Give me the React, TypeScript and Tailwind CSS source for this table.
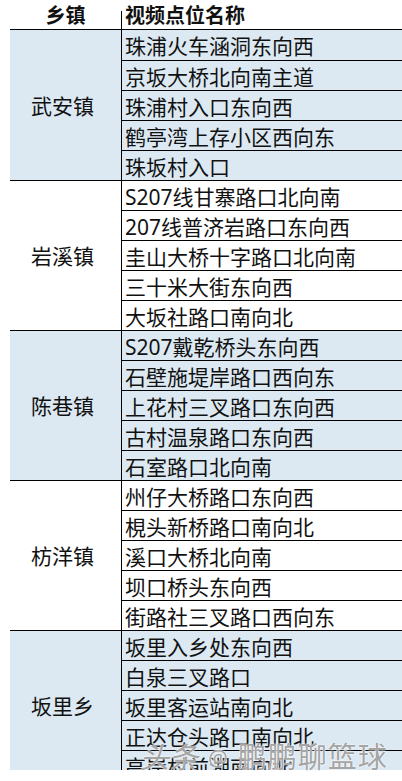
const groups: { town: string; spots: string[]; blue: boolean }[] = [
  {
    town: '武安镇',
    blue: true,
    spots: ['珠浦火车涵洞东向西', '京坂大桥北向南主道', '珠浦村入口东向西', '鹤亭湾上存小区西向东', '珠坂村入口'],
  },
  {
    town: '岩溪镇',
    blue: false,
    spots: ['S207线甘寨路口北向南', '207线普济岩路口东向西', '圭山大桥十字路口北向南', '三十米大街东向西', '大坂社路口南向北'],
  },
  {
    town: '陈巷镇',
    blue: true,
    spots: ['S207戴乾桥头东向西', '石壁施堤岸路口西向东', '上花村三叉路口东向西', '古村温泉路口东向西', '石室路口北向南'],
  },
  {
    town: '枋洋镇',
    blue: false,
    spots: ['州仔大桥路口东向西', '梘头新桥路口南向北', '溪口大桥北向南', '坝口桥头东向西', '街路社三叉路口西向东'],
  },
  {
    town: '坂里乡',
    blue: true,
    spots: ['坂里入乡处东向西', '白泉三叉路口', '坂里客运站南向北', '正达仓头路口南向北', '高岸村前湖南向北'],
  },
];

const font = "font-['Noto_Sans','Noto_Sans_CJK_SC',sans-serif]";

export default function App() {
  return (
    <div className={`relative w-[402px] h-[781px] bg-white text-[#111] ${font}`}>
      <div className="w-[392px] h-[770px] ml-[10px] overflow-hidden">
        {/* header */}
        <div className="flex h-[30px] border-b border-black">
          <div className="w-[111px] flex items-start justify-center pt-[4px] text-[20px] font-bold leading-[24px]">
            乡镇
          </div>
          <div className="w-px h-[18px] self-end bg-black" />
          <div className="pl-[3px] pt-[4px] text-[20px] font-bold leading-[24px]">视频点位名称</div>
        </div>

        {groups.map((g, gi) => (
          <div
            key={g.town}
            className={`flex ${gi > 0 ? 'border-t border-black' : ''} ${g.blue ? 'bg-[#dce9f3]' : 'bg-white'}`}
          >
            <div className="w-[112px] shrink-0 border-r border-black flex items-center justify-center pr-[6px] pt-[3px] text-[21px]">
              {g.town}
            </div>
            <div className="flex-1">
              {g.spots.map((s, i) => (
                <div
                  key={s}
                  className={`${i === 0 ? (gi === 0 ? 'h-[30px]' : 'h-[29px]') : 'h-[30px] border-t border-black'} pl-[3px] pt-[3px] text-[21px] leading-[26px] whitespace-nowrap`}
                >
                  {s}
                </div>
              ))}
            </div>
          </div>
        ))}
      </div>

      {/* watermark */}
      <div className="absolute left-[140px] top-[741px] flex items-center gap-[10px] text-[29px] leading-[32px] text-[#8c8c8c]/80 [text-shadow:0_0_2px_#fff,0_0_1px_#fff]">
        <span className="italic">头条</span>
        <span className="text-[22px]">@</span>
        <span className="tracking-[1px]">鹏鹏聊篮球</span>
      </div>
    </div>
  );
}
